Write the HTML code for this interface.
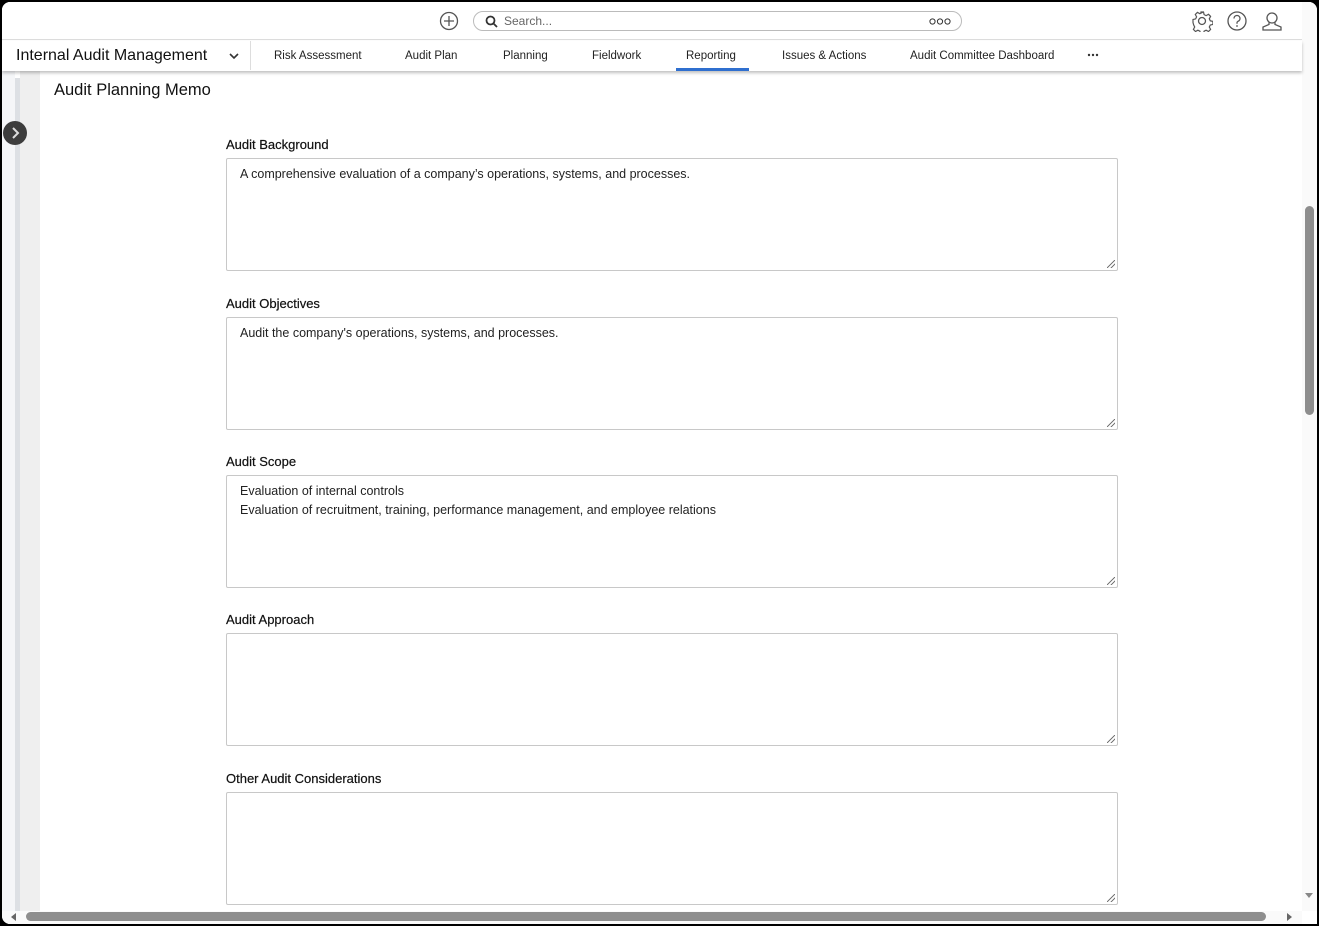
<!DOCTYPE html>
<html><head><meta charset="utf-8">
<style>
*{box-sizing:border-box;margin:0;padding:0}
html,body{width:1319px;height:926px;overflow:hidden;background:#000;font-family:"Liberation Sans",Arial,sans-serif;color:#1d1d1d}
#win{position:absolute;left:2px;top:2px;width:1315px;height:922px;background:#fff;border-radius:8px 8px 0 8px;overflow:hidden}
#top{position:absolute;left:0;top:0;width:1300px;height:38px;border-bottom:1px solid #ddd;background:#fff}
#nav{position:absolute;left:0;top:39px;width:1300px;height:30px;background:#fff;box-shadow:0 2px 3px rgba(0,0,0,.25);z-index:2}
.nv{position:absolute;top:9px;font-size:11.5px;color:#222}
#search{position:absolute;left:471px;top:9px;width:489px;height:20px;border:1px solid #bbb;border-radius:10px;font-size:12px;color:#666;padding:2px 0 0 30px}
#side1{position:absolute;left:0;top:69px;width:13px;height:840px;background:#f5f6f8}
#side2{position:absolute;left:13px;top:76px;width:5px;height:833px;background:#dde0e4}
#side3{position:absolute;left:18px;top:69px;width:20px;height:840px;background:#efefef}
#btn{position:absolute;left:1px;top:119px;width:24px;height:24px;border-radius:12px;background:#3d3d3d}
h1{position:absolute;left:52px;top:79px;font-size:16.5px;font-weight:normal;color:#111}
.lbl{position:absolute;left:224px;font-size:13px;color:#111;-webkit-text-stroke:0.2px #111}
.ta{position:absolute;left:224px;width:892px;height:113px;border:1px solid #c8c8c8;border-radius:2px;font-size:12.5px;padding:6px 13px;line-height:19px;color:#222}
.ta:after{content:"";position:absolute;right:2px;bottom:2px;width:8px;height:8px;background:linear-gradient(135deg,transparent 45%,#777 45%,#777 55%,transparent 55%,transparent 70%,#777 70%,#777 80%,transparent 80%)}
#vs{position:absolute;left:1300px;top:0;width:15px;height:909px;background:#fafafa}
#vt{position:absolute;left:1303px;top:204px;width:9px;height:209px;border-radius:5px;background:#8e8e8e}
#hs{position:absolute;left:0;top:909px;width:1300px;height:13px;background:#fafafa}
#ht{position:absolute;left:24px;top:910px;width:1240px;height:9px;border-radius:5px;background:#8e8e8e}
</style></head><body>
<div id="win">
<div id="top">
 <svg style="position:absolute;left:437px;top:9px" width="20" height="20" viewBox="0 0 20 20"><circle cx="10" cy="10" r="8.5" fill="none" stroke="#555" stroke-width="1.3"/><path d="M10 5v10M5 10h10" stroke="#555" stroke-width="1.3"/></svg>
 <div id="search">Search...
  <svg style="position:absolute;left:11px;top:3px" width="13" height="13" viewBox="0 0 13 13"><circle cx="5.5" cy="5.5" r="4" fill="none" stroke="#333" stroke-width="1.8"/><path d="M8.5 8.5l3.5 3.5" stroke="#333" stroke-width="1.8"/></svg>
  <svg style="position:absolute;right:10px;top:6px" width="22" height="7" viewBox="0 0 22 7"><circle cx="3.5" cy="3.5" r="2.6" fill="none" stroke="#333" stroke-width="1"/><circle cx="11" cy="3.5" r="2.6" fill="none" stroke="#333" stroke-width="1"/><circle cx="18.5" cy="3.5" r="2.6" fill="none" stroke="#333" stroke-width="1"/></svg>
 </div>
 <svg style="position:absolute;left:1189px;top:8px" width="22" height="22" viewBox="0 0 22 22"><circle cx="11" cy="11" r="3.5" fill="none" stroke="#555" stroke-width="1.3"/><path d="M9.5 2h3l.6 2.6 2 1 2.4-1.3 2.1 2.1-1.3 2.4 1 2 2.6.6v3l-2.6.6-1 2 1.3 2.4-2.1 2.1-2.4-1.3-2 1-.6 2.6h-3l-.6-2.6-2-1-2.4 1.3-2.1-2.1 1.3-2.4-1-2L2 12.5v-3l2.6-.6 1-2-1.3-2.4 2.1-2.1 2.4 1.3 2-1z" fill="none" stroke="#555" stroke-width="1.2"/></svg>
 <svg style="position:absolute;left:1224px;top:8px" width="22" height="22" viewBox="0 0 22 22"><circle cx="11" cy="11" r="9" fill="none" stroke="#555" stroke-width="1.3"/><path d="M8 8.5a3 3 0 1 1 4 2.8c-.7.3-1 .8-1 1.5v1" fill="none" stroke="#555" stroke-width="1.3"/><circle cx="11" cy="16" r=".9" fill="#555"/></svg>
 <svg style="position:absolute;left:1258px;top:7px" width="24" height="24" viewBox="0 0 24 24"><circle cx="12" cy="9" r="5" fill="none" stroke="#555" stroke-width="1.3"/><path d="M9 13.5v2L3 18v3h18v-3l-6-2.5v-2" fill="none" stroke="#555" stroke-width="1.3"/></svg>
 <svg style="position:absolute;left:1302px;top:9px" width="10" height="8"><path d="M1 7L5 2 9 7z" fill="#888"/></svg>
</div>
<div id="nav">
 <div style="position:absolute;left:14px;top:6px;font-size:16px;color:#111">Internal Audit Management</div>
 <svg style="position:absolute;left:227px;top:11px" width="10" height="8"><path d="M1 2l4 4 4-4" fill="none" stroke="#333" stroke-width="1.6"/></svg>
 <div style="position:absolute;left:248px;top:0;width:1px;height:29px;background:#ddd"></div>
 <div class="nv" style="left:272px">Risk Assessment</div>
 <div class="nv" style="left:403px">Audit Plan</div>
 <div class="nv" style="left:501px">Planning</div>
 <div class="nv" style="left:590px">Fieldwork</div>
 <div class="nv" style="left:684px">Reporting</div>
 <div style="position:absolute;left:674px;top:27px;width:73px;height:3px;background:#2f6fcf"></div>
 <div class="nv" style="left:780px">Issues &amp; Actions</div>
 <div class="nv" style="left:908px">Audit Committee Dashboard</div>
 <svg style="position:absolute;left:1085px;top:12px" width="12" height="4"><circle cx="2" cy="2" r="1.2" fill="#333"/><circle cx="6" cy="2" r="1.2" fill="#333"/><circle cx="10" cy="2" r="1.2" fill="#333"/></svg>
</div>
<div id="side1"></div><div id="side2"></div><div id="side3"></div>
<div id="btn"><svg width="24" height="24"><path d="M10 7l5 5-5 5" fill="none" stroke="#ddd" stroke-width="2"/></svg></div>
<h1>Audit Planning Memo</h1>
<div class="lbl" style="top:135px">Audit Background</div>
<div class="ta" style="top:156px">A comprehensive evaluation of a company’s operations, systems, and processes.</div>
<div class="lbl" style="top:294px">Audit Objectives</div>
<div class="ta" style="top:315px">Audit the company's operations, systems, and processes.</div>
<div class="lbl" style="top:452px">Audit Scope</div>
<div class="ta" style="top:473px">Evaluation of internal controls<br>Evaluation of recruitment, training, performance management, and employee relations</div>
<div class="lbl" style="top:610px">Audit Approach</div>
<div class="ta" style="top:631px"></div>
<div class="lbl" style="top:769px">Other Audit Considerations</div>
<div class="ta" style="top:790px"></div>
<div id="vs"></div><div id="vt"></div>
<svg style="position:absolute;left:1302px;top:890px" width="10" height="8"><path d="M1 1L5 6 9 1z" fill="#888"/></svg>
<div id="hs"></div><div id="ht"></div>
<svg style="position:absolute;left:7px;top:910px" width="8" height="10"><path d="M7 1L2 5 7 9z" fill="#666"/></svg>
<svg style="position:absolute;left:1284px;top:910px" width="8" height="10"><path d="M1 1L6 5 1 9z" fill="#666"/></svg>
</div>
</body></html>
